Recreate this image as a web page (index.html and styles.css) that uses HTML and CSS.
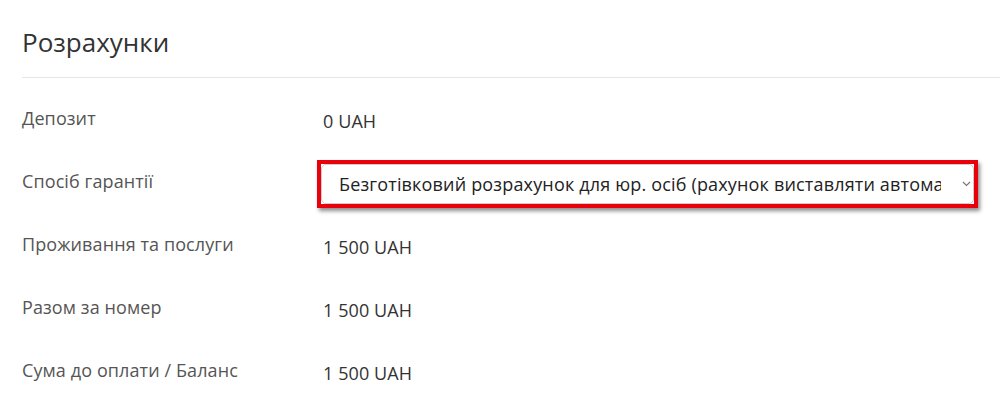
FILE: index.html
```html
<!DOCTYPE html>
<html lang="uk">
<head>
  <meta charset="UTF-8">
  <meta name="viewport" content="width=device-width, initial-scale=1.0">
  <title>Розрахунки</title>
  <link rel="stylesheet" href="styles.css">
</head>
<body>
  <div class="panel">
    <h2 class="panel-title">Розрахунки</h2>

    <div class="row">
      <div class="row-label">Депозит</div>
      <div class="row-value">0 UAH</div>
    </div>

    <div class="row row-select">
      <div class="row-label">Спосіб гарантії</div>
      <div class="row-value">
        <div class="highlight">
          <div class="select">
            <span class="select-text">Безготівковий розрахунок для юр. осіб (рахунок виставляти автоматично)</span>
            <svg class="select-arrow" width="9" height="6" viewBox="0 0 9 6">
              <path d="M1 1l3.5 3.5L8 1" fill="none" stroke="#777" stroke-width="1.2"/>
            </svg>
          </div>
        </div>
      </div>
    </div>

    <div class="row">
      <div class="row-label">Проживання та послуги</div>
      <div class="row-value">1 500 UAH</div>
    </div>

    <div class="row">
      <div class="row-label">Разом за номер</div>
      <div class="row-value">1 500 UAH</div>
    </div>

    <div class="row">
      <div class="row-label">Сума до оплати / Баланс</div>
      <div class="row-value">1 500 UAH</div>
    </div>
  </div>
</body>
</html>
```

FILE: styles.css
```css
* {
  margin: 0;
  padding: 0;
  box-sizing: border-box;
}

body {
  font-family: "Open Sans", Arial, sans-serif;
  background-color: #ffffff;
  color: #333;
}

.panel {
  padding: 22px 0 0 22px;
}

.panel-title {
  font-size: 26px;
  font-weight: 400;
  line-height: 40px;
  color: #333;
  padding-bottom: 15px;
  border-bottom: 1px solid #e5e5e5;
}

.row {
  display: flex;
  align-items: center;
  height: 63px;
  font-size: 18px;
  letter-spacing: 0.1px;
}

.row:first-of-type {
  margin-top: 11px;
}

.row-label {
  width: 301px;
  color: #555;
  margin-top: -6px;
}

.row-value {
  flex: 1;
  color: #333;
}

.highlight {
  width: 661px;
  margin-left: -6px;
  margin-top: 1px;
  border: 4px solid #e8000b;
  box-shadow: 2px 3px 4px rgba(0, 0, 0, 0.45);
}

.select {
  display: flex;
  align-items: center;
  height: 40px;
  padding: 0 2px 0 17px;
  border: 1px solid #ccc;
  border-radius: 5px;
  background: #fff;
  color: #222;
}

.select-text {
  flex: 1;
  white-space: nowrap;
  overflow: hidden;
  letter-spacing: 0.17px;
}

.select-arrow {
  margin-left: 21px;
}
```
